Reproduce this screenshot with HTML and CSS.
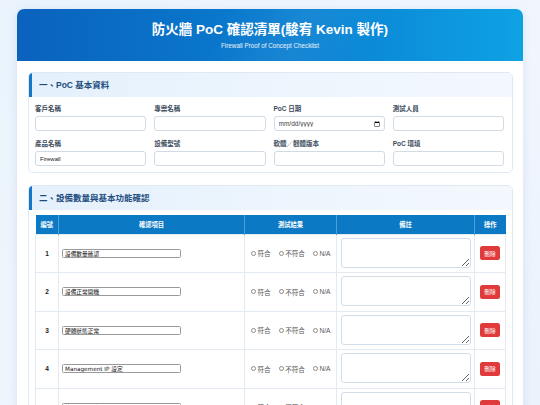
FILE: index.html
```html
<!DOCTYPE html>
<html lang="zh-Hant">
<head>
<meta charset="utf-8">
<title>防火牆 PoC 確認清單</title>
<link rel="stylesheet" href="styles.css">
</head>
<body>
<div class="container">
  <header class="page-header">
    <h1 class="title">防火牆 PoC 確認清單(駿宥 Kevin 製作)</h1>
    <p class="subtitle">Firewall Proof of Concept Checklist</p>
  </header>
  <main class="content">
    <section class="card">
      <h2 class="card-title">一、PoC 基本資料</h2>
      <div class="form-grid">
        <div class="field"><label class="field-label">客戶名稱</label><input class="field-input" type="text"></div>
        <div class="field"><label class="field-label">專案名稱</label><input class="field-input" type="text"></div>
        <div class="field"><label class="field-label">PoC 日期</label><input class="field-input date-input" type="date"></div>
        <div class="field"><label class="field-label">測試人員</label><input class="field-input" type="text"></div>
        <div class="field"><label class="field-label">產品名稱</label><input class="field-input" type="text" value="Firewall"></div>
        <div class="field"><label class="field-label">設備型號</label><input class="field-input" type="text"></div>
        <div class="field"><label class="field-label">軟體／韌體版本</label><input class="field-input" type="text"></div>
        <div class="field"><label class="field-label">PoC 環境</label><input class="field-input" type="text"></div>
      </div>
    </section>

    <section class="card">
      <h2 class="card-title">二、設備數量與基本功能確認</h2>
      <div class="table-wrap">
        <table class="check-table">
          <colgroup>
            <col class="col-no"><col class="col-item"><col class="col-result"><col class="col-note"><col class="col-op">
          </colgroup>
          <thead>
            <tr><th>編號</th><th>確認項目</th><th>測試結果</th><th>備註</th><th>操作</th></tr>
          </thead>
          <tbody>
            <tr>
              <td class="no">1</td>
              <td><input class="item-input" type="text" value="設備數量確認"></td>
              <td><div class="radios"><label class="radio"><input type="radio" name="r1">符合</label><label class="radio"><input type="radio" name="r1">不符合</label><label class="radio"><input type="radio" name="r1">N/A</label></div></td>
              <td class="note-cell"><textarea class="note"></textarea></td>
              <td class="op"><button class="del">刪除</button></td>
            </tr>
            <tr>
              <td class="no">2</td>
              <td><input class="item-input" type="text" value="設備正常開機"></td>
              <td><div class="radios"><label class="radio"><input type="radio" name="r2">符合</label><label class="radio"><input type="radio" name="r2">不符合</label><label class="radio"><input type="radio" name="r2">N/A</label></div></td>
              <td class="note-cell"><textarea class="note"></textarea></td>
              <td class="op"><button class="del">刪除</button></td>
            </tr>
            <tr>
              <td class="no">3</td>
              <td><input class="item-input" type="text" value="硬體狀態正常"></td>
              <td><div class="radios"><label class="radio"><input type="radio" name="r3">符合</label><label class="radio"><input type="radio" name="r3">不符合</label><label class="radio"><input type="radio" name="r3">N/A</label></div></td>
              <td class="note-cell"><textarea class="note"></textarea></td>
              <td class="op"><button class="del">刪除</button></td>
            </tr>
            <tr>
              <td class="no">4</td>
              <td><input class="item-input" type="text" value="Management IP 設定"></td>
              <td><div class="radios"><label class="radio"><input type="radio" name="r4">符合</label><label class="radio"><input type="radio" name="r4">不符合</label><label class="radio"><input type="radio" name="r4">N/A</label></div></td>
              <td class="note-cell"><textarea class="note"></textarea></td>
              <td class="op"><button class="del">刪除</button></td>
            </tr>
            <tr>
              <td class="no">5</td>
              <td><input class="item-input" type="text" value="管理介面可登入"></td>
              <td><div class="radios"><label class="radio"><input type="radio" name="r5">符合</label><label class="radio"><input type="radio" name="r5">不符合</label><label class="radio"><input type="radio" name="r5">N/A</label></div></td>
              <td class="note-cell"><textarea class="note"></textarea></td>
              <td class="op"><button class="del">刪除</button></td>
            </tr>
          </tbody>
        </table>
      </div>
    </section>
  </main>
</div>
</body>
</html>
```
FILE: styles.css
```css
* { box-sizing: border-box; }

html, body {
  margin: 0;
  padding: 0;
}

body {
  background: linear-gradient(135deg, #eaf3fc 0%, #f1f6fd 60%, #e9f1fb 100%);
  font-family: "Liberation Sans", Arial, "Noto Sans CJK TC", sans-serif;
  color: #2c3e50;
  min-height: 405px;
}

.container {
  width: 506px;
  margin: 9px auto 0;
  background: #ffffff;
  border-radius: 7px;
  box-shadow: 0 2px 10px rgba(40, 110, 190, 0.12);
  overflow: hidden;
}

.page-header {
  height: 52px;
  padding-top: 13px;
  text-align: center;
  color: #ffffff;
  background:
    linear-gradient(115deg, rgba(255,255,255,0) 40%, rgba(255,255,255,0.06) 55%, rgba(255,255,255,0) 70%),
    linear-gradient(90deg, #0a62be 0%, #0a7fd1 55%, #0ea2e4 100%);
}

.title {
  margin: 0;
  font-size: 13.5px;
  line-height: 16px;
  font-weight: 700;
  font-family: "Liberation Sans", Arial, "Noto Sans CJK TC", sans-serif;
}

.subtitle {
  margin: 3.5px 0 0;
  font-size: 6.3px;
  line-height: 8px;
  opacity: 0.92;
}

.content {
  padding: 11px 10px 11px 11px;
}

.card {
  border: 1px solid #e0e9f2;
  border-radius: 5px;
  background: #ffffff;
  overflow: hidden;
}

.card + .card {
  margin-top: 12px;
}

.card-title {
  margin: 0;
  height: 24px;
  line-height: 24px;
  padding-left: 7px;
  border-left: 3px solid #1677c9;
  background: linear-gradient(90deg, #e4f0fc 0%, #eef6fd 60%, #f3f8fe 100%);
  color: #1d4d7e;
  font-size: 8.5px;
  font-weight: 700;
  font-family: "Liberation Sans", Arial, "Noto Sans CJK TC", sans-serif;
}

.form-grid {
  display: grid;
  grid-template-columns: repeat(4, 1fr);
  gap: 9px 8px;
  padding: 8px 8px 6px 6px;
}

.field {
  display: flex;
  flex-direction: column;
}

.field-label {
  font-size: 6.5px;
  line-height: 8px;
  font-weight: 700;
  color: #3a4b5c;
  margin-bottom: 3px;
}

.field-input {
  height: 15px;
  width: 100%;
  border: 1px solid #d0dbe5;
  border-radius: 3px;
  padding: 0 4px;
  font-size: 6px;
  font-family: "Liberation Sans", Arial, "Noto Sans CJK TC", sans-serif;
  color: #222;
  background: #fff;
  outline: none;
}

.date-input {
  color: #444;
  font-size: 6.5px;
}

.date-input::-webkit-calendar-picker-indicator {
  width: 6px;
  height: 6px;
  padding: 0;
  margin: 0;
}

.date-input::-webkit-datetime-edit,
.date-input::-webkit-datetime-edit-fields-wrapper,
.date-input::-webkit-datetime-edit-month-field,
.date-input::-webkit-datetime-edit-day-field,
.date-input::-webkit-datetime-edit-year-field,
.date-input::-webkit-datetime-edit-text {
  padding: 0;
}

.table-wrap {
  padding: 5px 7px 8px 6px;
}

.check-table {
  width: 470px;
  border-collapse: collapse;
  table-layout: fixed;
  font-size: 6px;
}

.col-no { width: 23px; }
.col-item { width: 186px; }
.col-result { width: 92px; }
.col-note { width: 138px; }
.col-op { width: 31px; }

.check-table th {
  height: 19px;
  background: #0b79c3;
  color: #ffffff;
  font-size: 6.3px;
  font-weight: 700;
  text-align: center;
  border-left: 1px solid #4a9fd9;
  padding: 0;
}

.check-table th:first-child { border-left: none; }

.check-table td {
  border: 1px solid #e3eaf1;
  padding: 0 3px;
  vertical-align: middle;
  height: 37.5px;
}

.check-table td.no {
  text-align: center;
  font-weight: 700;
  font-size: 6.5px;
  color: #222;
}

.item-input {
  display: block;
  width: 119px;
  height: 9px;
  border: 1px solid #999;
  border-radius: 1.5px;
  padding: 0 2px;
  font-size: 5.7px;
  line-height: 7px;
  font-family: "DejaVu Sans", "Noto Sans CJK TC", sans-serif;
  color: #111;
  background: #fff;
}

.radios {
  display: flex;
  gap: 8px;
  padding-left: 3px;
  white-space: nowrap;
}

.radio {
  display: flex;
  align-items: center;
  gap: 1.5px;
  color: #555;
  font-size: 6.6px;
}

.radio input {
  appearance: none;
  -webkit-appearance: none;
  width: 5px;
  height: 5px;
  margin: 0;
  border: 0.6px solid #8a8a8a;
  border-radius: 50%;
  background: #fff;
}

.check-table td.note-cell {
  padding: 3px 4px 4.5px;
}

.note {
  display: block;
  width: 130px;
  height: 30px;
  border: 1px solid #d3dde7;
  border-radius: 3px;
  resize: vertical;
  font-size: 6px;
}

.check-table td.op {
  text-align: center;
  padding: 0;
}

.del {
  width: 20px;
  height: 14px;
  padding: 0;
  border: none;
  border-radius: 2.5px;
  background: #e03a3a;
  color: #ffffff;
  font-size: 5.7px;
  font-family: "Liberation Sans", Arial, "Noto Sans CJK TC", sans-serif;
}
```
